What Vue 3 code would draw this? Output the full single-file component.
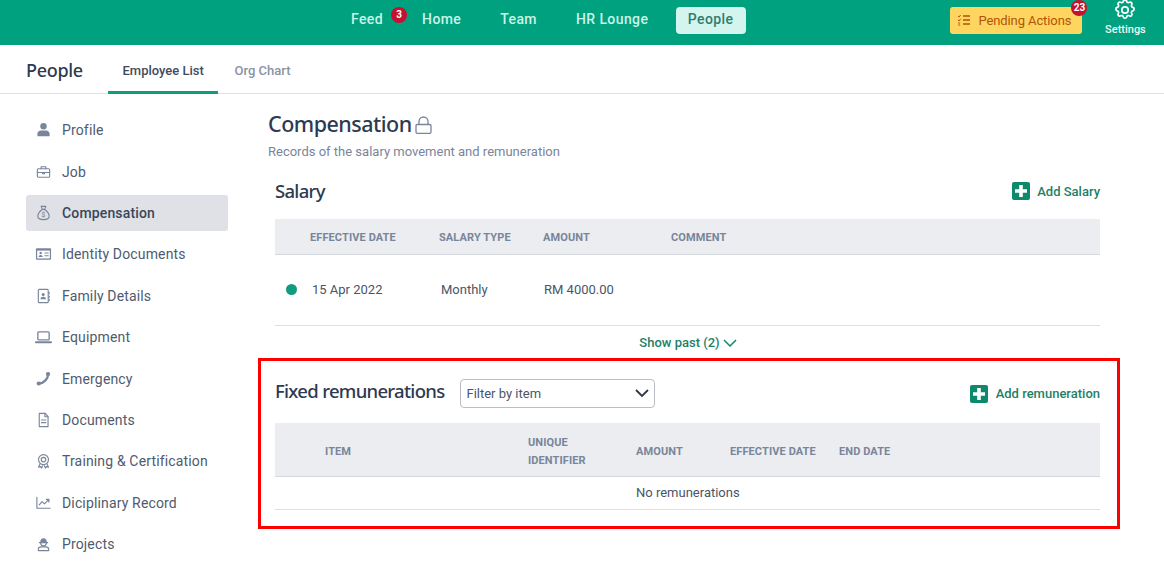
<script setup>
const nav = [
  { label: 'Feed', badge: '3' },
  { label: 'Home' },
  { label: 'Team' },
  { label: 'HR Lounge' },
  { label: 'People', active: true },
]
const side = [
  { label: 'Profile', icon: 'profile' },
  { label: 'Job', icon: 'job' },
  { label: 'Compensation', icon: 'money', active: true },
  { label: 'Identity Documents', icon: 'id' },
  { label: 'Family Details', icon: 'family' },
  { label: 'Equipment', icon: 'laptop' },
  { label: 'Emergency', icon: 'phone' },
  { label: 'Documents', icon: 'doc' },
  { label: 'Training & Certification', icon: 'award' },
  { label: 'Diciplinary Record', icon: 'chart' },
  { label: 'Projects', icon: 'worker' },
]
</script>

<template>
  <div class="page">
    <header class="topbar">
      <nav class="topnav">
        <a v-for="n in nav" :key="n.label" class="topnav-item" :class="{ active: n.active, feed: n.badge }">
          {{ n.label }}
          <span v-if="n.badge" class="badge feed-badge">{{ n.badge }}</span>
        </a>
      </nav>
      <button class="pending">
        <svg width="14" height="14" viewBox="0 0 14 14" fill="none" stroke="#b45309" stroke-width="1.3">
          <path d="M6 3h7M6 7h7M6 11h7" />
          <path d="M1 3l1 1 1.6-2M1 7l1 1 1.6-2M1.2 10h2M1.2 12h2" stroke-width="1" />
        </svg>
        <span>Pending Actions</span>
        <span class="badge pending-badge">23</span>
      </button>
      <div class="settings">
        <svg width="24" height="24" viewBox="0 0 24 24" fill="none" stroke="#fff" stroke-width="1.7" stroke-linecap="round" stroke-linejoin="round">
          <path d="M10.3 3.3c.4-1.8 3-1.8 3.4 0a1.7 1.7 0 0 0 2.6 1.1c1.5-1 3.4.9 2.4 2.4a1.7 1.7 0 0 0 1.1 2.6c1.8.4 1.8 3 0 3.4a1.7 1.7 0 0 0-1.1 2.6c1 1.5-.9 3.4-2.4 2.4a1.7 1.7 0 0 0-2.6 1.1c-.4 1.8-3 1.8-3.4 0a1.7 1.7 0 0 0-2.6-1.1c-1.5 1-3.4-.9-2.4-2.4a1.7 1.7 0 0 0-1.1-2.6c-1.8-.4-1.8-3 0-3.4a1.7 1.7 0 0 0 1.1-2.6c-1-1.5.9-3.4 2.4-2.4a1.7 1.7 0 0 0 2.6-1.1z" />
          <circle cx="12" cy="12" r="3.2" />
        </svg>
        <span>Settings</span>
      </div>
    </header>

    <div class="subnav">
      <div class="subnav-title">People</div>
      <a class="tab tab-active">Employee List</a>
      <a class="tab">Org Chart</a>
    </div>

    <div class="body">
      <aside class="sidebar">
        <a v-for="s in side" :key="s.label" class="side-item" :class="{ active: s.active }">
          <span class="side-icon">
            <svg width="18" height="18" viewBox="0 0 18 18" fill="none" stroke="#79859a" stroke-width="1.2" stroke-linecap="round" stroke-linejoin="round">
              <template v-if="s.icon === 'profile'">
                <circle cx="9" cy="5" r="3.4" fill="#79859a" stroke="none" />
                <path d="M2.500 15.500v-2.200c0-2.300 1.800-3.700 4-3.700h5c2.200 0 4 1.400 4 3.700v2.200z" fill="#79859a" stroke="none" />
              </template>
              <template v-else-if="s.icon === 'job'">
                <rect x="2.500" y="5.500" width="13" height="9" rx="1" />
                <path d="M6.500 5.500V3.500h5v2M2.500 9.500h13M8 9.500v1.400h2V9.500" />
              </template>
              <template v-else-if="s.icon === 'money'">
                <path d="M6.500 2h5l-1.300 3.200H7.800zM7.800 5.200C5 7 3 9.500 3 12.500 3 15 5 16 9 16s6-1 6-3.500c0-3-2-5.500-4.800-7.300z" />
                <text x="9" y="13.500" text-anchor="middle" font-size="7" fill="#79859a" stroke="none" font-family="Roboto, sans-serif">$</text>
              </template>
              <template v-else-if="s.icon === 'id'">
                <rect x="1" y="3" width="16" height="12" rx="1" fill="#79859a" stroke="none" />
                <rect x="2.300" y="5.400" width="13.400" height="8.300" fill="#fff" stroke="none" />
                <circle cx="6" cy="8" r="1.300" fill="#79859a" stroke="none" />
                <path d="M3.800 12.200c0-1.400 1-2.200 2.200-2.200s2.200.8 2.200 2.200z" fill="#79859a" stroke="none" />
                <path d="M10.500 8h3.500M10.500 10.800h3.500" />
              </template>
              <template v-else-if="s.icon === 'family'">
                <rect x="3.500" y="2" width="10.500" height="14" rx="1" />
                <circle cx="8.700" cy="7.300" r="1.600" fill="#79859a" stroke="none" />
                <path d="M5.800 12.500c0-1.800 1.300-2.600 2.900-2.600s2.900.8 2.900 2.600z" fill="#79859a" stroke="none" />
                <path d="M15 5v1.500M15 9v1.500M15 12.500V14" />
              </template>
              <template v-else-if="s.icon === 'laptop'">
                <rect x="3" y="3.500" width="12" height="8.500" rx="1" stroke-width="1.400" />
                <path d="M1 14.500h16" stroke-width="2" />
              </template>
              <template v-else-if="s.icon === 'phone'">
                <path d="M14 3.500c0 5-4.500 10-10 10.500" stroke-width="2.400" />
                <ellipse cx="13.800" cy="3.800" rx="2.300" ry="2.100" fill="#79859a" stroke="none" />
                <ellipse cx="4" cy="13.800" rx="2.300" ry="2.100" fill="#79859a" stroke="none" />
              </template>
              <template v-else-if="s.icon === 'doc'">
                <path d="M4.500 2h6.300l3 3.200V16h-9.300z" />
                <path d="M10.500 2v3.500h3.300M6.800 9h4.600M6.800 11.800h4.600" />
              </template>
              <template v-else-if="s.icon === 'award'">
                <circle cx="9" cy="7.500" r="5.300" />
                <circle cx="9" cy="7.500" r="2.400" />
                <path d="M5.500 12l-1.800 3.500 2.300-.5 1 1.500 1-2.500M12.500 12l1.800 3.500-2.300-.5-1 1.500-1-2.500" />
              </template>
              <template v-else-if="s.icon === 'chart'">
                <path d="M2 3v11.500h14" />
                <path d="M4.500 11l3-3.500 2.500 2.500 4.500-4.500" />
                <path d="M12 5.200h2.700V8" fill="#79859a" />
              </template>
              <template v-else>
                <path d="M5.500 7c0-2.400 1.500-4 3.500-4s3.500 1.600 3.500 4z" fill="#79859a" stroke="none" />
                <path d="M4.500 7.500h9M6 8c0 2 1.200 3 3 3s3-1 3-3" />
                <path d="M3.500 16v-1.500C3.500 13 5 12 6.500 12h5c1.500 0 3 1 3 2.500V16z" />
              </template>
            </svg>
          </span>
          <span>{{ s.label }}</span>
        </a>
      </aside>

      <main class="main">
        <div class="title-row">
          <h1>Compensation</h1>
          <svg class="lock" width="17" height="18" viewBox="0 0 17 18" fill="none" stroke="#79859a" stroke-width="1.300">
            <rect x="1" y="8.500" width="15" height="8.800" rx="1.200" />
            <path d="M4 8.500V5.500a4.500 4.500 0 0 1 9 0v3" />
          </svg>
        </div>
        <p class="subtitle">Records of the salary movement and remuneration</p>

        <section class="salary">
          <div class="section-head">
            <h2>Salary</h2>
            <a class="add add-salary">
              <svg width="18" height="18" viewBox="0 0 18 18">
                <rect width="18" height="18" rx="2" fill="#0d8a6c" />
                <path d="M9 3v12M3 9h12" stroke="#fff" stroke-width="3.600" />
              </svg>
              <span>Add Salary</span>
            </a>
          </div>
          <div class="thead salary-grid">
            <span>EFFECTIVE DATE</span><span>SALARY TYPE</span><span>AMOUNT</span><span>COMMENT</span>
          </div>
          <div class="salary-row salary-grid">
            <span class="dot"></span>
            <span>15 Apr 2022</span><span>Monthly</span><span>RM 4000.00</span>
          </div>
          <a class="show-past">
            Show past (2)
            <svg width="14" height="8" viewBox="0 0 14 8" fill="none" stroke="#0d8a6c" stroke-width="1.500"><path d="M1 1l6 6 6-6" /></svg>
          </a>
        </section>

        <section class="fixed">
          <div class="section-head fixed-head">
            <h2>Fixed remunerations</h2>
            <div class="select">
              <span>Filter by item</span>
              <svg width="14" height="9" viewBox="0 0 14 9" fill="none" stroke="#2d3748" stroke-width="1.800"><path d="M1 1l6 6 6-6" /></svg>
            </div>
            <a class="add add-right">
              <svg width="18" height="18" viewBox="0 0 18 18">
                <rect width="18" height="18" rx="2" fill="#0d8a6c" />
                <path d="M9 3v12M3 9h12" stroke="#fff" stroke-width="3.600" />
              </svg>
              <span>Add remuneration</span>
            </a>
          </div>
          <div class="thead fixed-grid">
            <span>ITEM</span>
            <span class="two-line">UNIQUE<br />IDENTIFIER</span>
            <span>AMOUNT</span>
            <span>EFFECTIVE DATE</span>
            <span>END DATE</span>
          </div>
          <div class="empty">No remunerations</div>
        </section>
      </main>
    </div>

    <div class="highlight"></div>
  </div>
</template>

<style>
html, body { margin: 0; background: #fff; }
</style>

<style scoped>
.page {
  position: relative;
  width: 1164px;
  height: 566px;
  overflow: hidden;
  font-family: Roboto, "Liberation Sans", sans-serif;
  color: #4a5568;
  background: #fff;
}
a { cursor: pointer; }

.topbar {
  height: 45px;
  background: #00a17f;
  display: flex;
  align-items: flex-start;
  box-sizing: border-box;
}
.topnav {
  display: flex;
  align-items: center;
  margin-left: 339px;
  height: 40px;
}
.topnav-item {
  position: relative;
  font-size: 14px;
  font-weight: 500;
  color: #c9f5e8;
  padding: 0 12px;
  margin-right: 15px;
  height: 27px;
  line-height: 25px;
  border-radius: 4px;
  letter-spacing: 0.4px;
}
.topnav-item.active {
  background: #d3f5ed;
  color: #2f7d70;
  margin-right: 0;
  margin-left: 0.500px;
  padding-right: 12.500px;
}
.badge {
  position: absolute;
  background: #c5102f;
  color: #fff;
  font-size: 10px;
  font-weight: 700;
  border-radius: 50%;
  width: 16px;
  height: 16px;
  line-height: 16px;
  text-align: center;
  letter-spacing: 0;
}
.feed-badge { right: -12px; top: 0; }
.pending {
  position: relative;
  display: flex;
  align-items: center;
  gap: 7px;
  margin-left: 204.500px;
  margin-top: 7px;
  width: 132px;
  height: 27px;
  padding: 0 0 1px 7px;
  box-sizing: border-box;
  background: #fdd55f;
  border: 0;
  border-radius: 3px;
  color: #b45309;
  font: 400 13px Roboto, sans-serif;
  letter-spacing: -0.1px;
}
.pending-badge { right: -5px; top: -7px; }
.settings {
  margin-left: 22px;
  width: 42px;
  display: flex;
  flex-direction: column;
  align-items: center;
  color: #e8fbf5;
  font-size: 11px;
  font-weight: 500;
  line-height: 13px;
}
.settings svg { margin-top: -2px; }
.settings span { margin-top: 1px; white-space: nowrap; }

.subnav {
  height: 49px;
  box-sizing: border-box;
  border-bottom: 1px solid #dcdfe3;
  display: flex;
  align-items: stretch;
  padding-left: 26px;
}
.subnav-title {
  font-family: "Noto Sans", sans-serif;
  font-size: 18px;
  font-weight: 500;
  letter-spacing: -0.3px;
  color: #2d3a50;
  line-height: 50px;
  width: 82px;
}
.tab {
  font-size: 13px;
  font-weight: 500;
  color: #8a93a5;
  line-height: 51px;
  padding: 0 14.500px;
  height: 48px;
  margin-right: 2px;
  white-space: nowrap;
}
.tab-active {
  color: #3f4c60;
  box-sizing: border-box;
  height: 49px;
  width: 110px;
  border-bottom: 3px solid #0f9d80;
}

.body { display: flex; }
.sidebar {
  width: 202px;
  margin-left: 26px;
  padding-top: 18.300px;
  display: flex;
  flex-direction: column;
  gap: 5.400px;
  flex: none;
}
.side-item {
  height: 36px;
  display: flex;
  align-items: center;
  gap: 10px;
  padding-left: 9px;
  font-size: 14px;
  color: #4f5b6e;
  border-radius: 3px;
  letter-spacing: 0.15px;
}
.side-item.active {
  background: #dfe1e6;
  color: #3a4759;
  font-weight: 500;
}
.side-icon { width: 17px; height: 18px; display: flex; align-items: center; justify-content: center; }

.main { margin-left: 40px; width: 832px; padding-top: 14px; }
.title-row { display: flex; align-items: center; gap: 3px; height: 30px; }
h1 {
  margin: 1px 0 0;
  font-family: "Noto Sans", sans-serif;
  font-size: 21.500px;
  font-weight: 500;
  letter-spacing: -0.5px;
  color: #2d3a50;
  line-height: 30px;
}
.lock { margin-top: 3px; }
.subtitle {
  margin: 4px 0 0;
  font-size: 13px;
  line-height: 20px;
  color: #79859a;
}

.salary { margin-left: 7px; margin-top: 17px; }
.section-head {
  display: flex;
  justify-content: space-between;
  align-items: center;
  height: 24px;
  margin-bottom: 16px;
}
h2 {
  margin: -2px 0 0;
  font-family: "Noto Sans", sans-serif;
  font-size: 18.500px;
  font-weight: 500;
  letter-spacing: -0.7px;
  color: #2d3a50;
}
.add {
  display: flex;
  align-items: center;
  gap: 8px;
  font-size: 13px;
  font-weight: 500;
  color: #1e7f68;
}
.add-salary { gap: 7px; }
.thead {
  background: #ebedf0;
  border-bottom: 1px solid #d5d8dc;
  font-size: 11px;
  font-weight: 700;
  color: #79859a;
  align-items: center;
  box-sizing: border-box;
  letter-spacing: 0.1px;
}
.salary-grid {
  display: grid;
  grid-template-columns: 129px 104px 128px 1fr;
  padding-left: 35px;
}
.salary .thead { height: 36px; padding-top: 1px; }
.salary-row {
  position: relative;
  height: 71px;
  box-sizing: border-box;
  border-bottom: 1px solid #dcdfe3;
  align-items: center;
  font-size: 13px;
  color: #4a5568;
  padding-left: 37px;
  padding-bottom: 2px;
  grid-template-columns: 129px 103px 128px 1fr;
}
.dot {
  position: absolute;
  left: 11px;
  top: 29px;
  width: 11px;
  height: 11px;
  border-radius: 50%;
  background: #0f9d80;
}
.show-past {
  display: flex;
  justify-content: center;
  align-items: center;
  gap: 3px;
  height: 33px;
  padding-left: 1px;
  font-size: 13px;
  font-weight: 500;
  color: #1e7f68;
}

.fixed { margin-left: 7px; padding-top: 20px; }
.fixed-head { justify-content: flex-start; height: 29px; margin-bottom: 15px; }
.fixed-head h2 { margin-top: -6px; }
.fixed-head .select { margin-left: 16px; }
.add-right { margin-left: auto; }
.select {
  width: 195px;
  height: 29px;
  box-sizing: border-box;
  border: 1px solid #b9bec6;
  border-radius: 4px;
  display: flex;
  align-items: center;
  justify-content: space-between;
  padding: 0 5px;
  font-size: 13px;
  color: #4a5568;
}
.fixed-grid {
  display: grid;
  grid-template-columns: 203px 108px 94px 109px 1fr;
  padding-left: 50px;
  padding-top: 4px;
  height: 54px;
}
.two-line { line-height: 18px; }
.empty {
  height: 33px;
  box-sizing: border-box;
  border-bottom: 1px solid #dcdfe3;
  padding-left: 361px;
  font-size: 13px;
  line-height: 31px;
  color: #4a5568;
}

.highlight {
  position: absolute;
  left: 258px;
  top: 358px;
  width: 862px;
  height: 171px;
  box-sizing: border-box;
  border: 3px solid #f00;
  pointer-events: none;
}
</style>
